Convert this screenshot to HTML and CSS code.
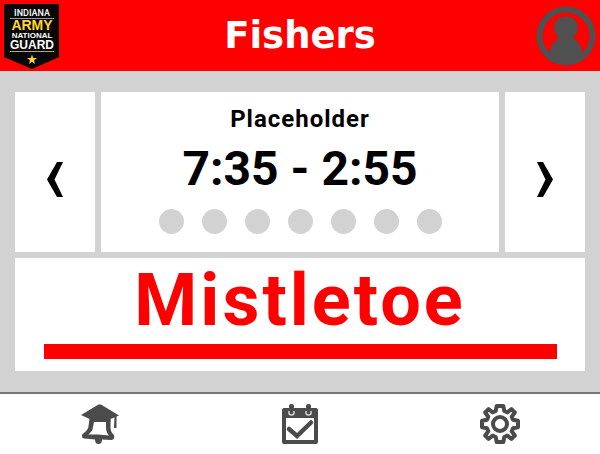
FILE: index.html
```html
<!DOCTYPE html>
<html lang="en">
<head>
<meta charset="utf-8">
<meta name="viewport" content="width=device-width, initial-scale=1">
<title>Fishers</title>
<link rel="stylesheet" href="styles.css">
</head>
<body>
<header class="topbar">
  <a class="badge" href="#" aria-label="Indiana Army National Guard">
    <svg width="56" height="65" viewBox="0 0 56 65">
      <path d="M2 0H54Q55 0 55 2V53L28 65L0 53V2Q0 0 2 0Z" fill="#080808"/>
      <g text-anchor="middle" fill="#fff" class="badge-text">
        <text x="28" y="12" font-size="9" class="light">INDIANA</text>
        <text x="28" y="26" font-size="14" fill="#ffd530">ARMY</text>
        <text x="28" y="34" font-size="8">NATIONAL</text>
        <text x="28" y="45" font-size="12">GUARD</text>
      </g>
      <path d="M6 14.500H50" stroke="#9a9a9a"/>
      <path d="M6 47.500H50" stroke="#b9a65a"/>
      <path d="M28 50.500L29.200 54H33L30 56.200L31.100 60L28 57.700L24.900 60L26 56.200L23 54H26.800Z" fill="#ffd530"/>
    </svg>
  </a>
  <h1 class="title">Fishers</h1>
  <button class="profile" type="button" aria-label="Profile">
    <svg width="60" height="60" viewBox="0 0 60 60">
      <circle cx="30" cy="30" r="26.500" fill="none" stroke="#505050" stroke-width="6"/>
      <path d="M13 47C15 39 19 34 23 31.500C20 29 18 26 18 22C18 15 23 10.500 30 10.500S42 15 42 22C42 26 40 29 37 31.500C41 34 45 39 47 47Q40 57 30 57T13 47Z" fill="#505050"/>
    </svg>
  </button>
</header>

<main class="content">
  <button class="card arrow" type="button" aria-label="Previous">
    <svg width="16" height="35" viewBox="0 0 16 35"><path d="M10 0H16L7.500 17.500L16 35H10L0 17.500Z"/></svg>
  </button>
  <section class="card schedule">
    <h2 class="period">Placeholder</h2>
    <p class="time">7:35 - 2:55</p>
    <div class="dots">
      <span class="dot"></span><span class="dot"></span><span class="dot"></span><span class="dot"></span><span class="dot"></span><span class="dot"></span><span class="dot"></span>
    </div>
  </section>
  <button class="card arrow" type="button" aria-label="Next">
    <svg width="16" height="35" viewBox="0 0 16 35"><path d="M6 0H0L8.500 17.500L0 35H6L16 17.500Z"/></svg>
  </button>
  <section class="card event">
    <p class="event-name">Mistletoe</p>
    <div class="event-bar"></div>
  </section>
</main>

<nav class="tabs">
  <a class="tab" href="#" aria-label="Bell schedule">
    <svg width="40" height="40" viewBox="0 0 40 40">
      <path d="M9.500 15L8.500 22C8 27 4 28 2 31Q1.500 34 4 34.500L15 35.500Q15 40 18.500 40T22 35.500L32 36Q35 35 34 31C31 28 30.500 26 30.500 22V15ZM14 18H26V23C26 27 27 29 29 31.500L18 30.500L8.500 30.500C11 28 12.500 27 13 23Z" fill="#4b4b4b" fill-rule="evenodd"/>
      <path d="M1 11L18.500 0.500L21 0.500L39 11.500L30.500 15V18Q20 13.500 10 18L9.500 15Z" fill="#4b4b4b"/>
      <path d="M20 9L35.500 12" fill="none" stroke="#4b4b4b"/>
      <path d="M34.500 12H36.500V24H34Z" fill="#4b4b4b"/>
    </svg>
  </a>
  <a class="tab" href="#" aria-label="Calendar">
    <svg width="40" height="40" viewBox="0 0 40 40">
      <path d="M4 4H36Q38 4 38 6V38Q38 40 36 40H4Q2 40 2 38V6Q2 4 4 4ZM6 14V36H34V14Z" fill="#4b4b4b" fill-rule="evenodd"/>
      <rect x="9" y="0" width="5" height="10" rx="2" fill="#4b4b4b"/>
      <rect x="26" y="0" width="5" height="10" rx="2" fill="#4b4b4b"/>
      <path d="M9 7V9Q9 11 11.500 11T14 9V7M26 7V9Q26 11 28.500 11T31 9V7" fill="none" stroke="#d6d6d6" stroke-width="1.500"/>
      <path d="M9 25L17 32L31 18.500" fill="none" stroke="#4b4b4b" stroke-width="4.500" stroke-linecap="round"/>
    </svg>
  </a>
  <a class="tab" href="#" aria-label="Settings">
    <svg width="40" height="40" viewBox="0 0 40 40">
      <path d="M16.700 2H23.300L24.300 7L27.300 8.300L31.500 5.200L34.800 8.500L31.700 12.700L33 15.700L38 16.700V23.300L33 24.300L31.700 27.300L34.800 31.500L31.500 34.800L27.300 31.700L24.300 33L23.300 38H16.700L15.700 33L12.700 31.700L8.500 34.800L5.200 31.500L8.300 27.300L7 24.300L2 23.300V16.700L7 15.700L8.300 12.700L5.200 8.500L8.500 5.200L12.700 8.300L15.700 7Z" fill="none" stroke="#4b4b4b" stroke-width="4" stroke-linejoin="round"/>
      <circle cx="20" cy="20" r="7" fill="none" stroke="#4b4b4b" stroke-width="4"/>
    </svg>
  </a>
</nav>
</body>
</html>
```
FILE: styles.css
```css
* {
  box-sizing: border-box;
}

body {
  margin: 0;
  min-height: 100vh;
  display: flex;
  flex-direction: column;
  background: #d2d2d2;
  color: #000;
  font-family: Roboto, "Liberation Sans", sans-serif;
}

h1, h2, p {
  margin: 0;
}

button {
  border: 0;
  padding: 0;
  background: none;
  color: inherit;
  cursor: pointer;
}

svg {
  display: block;
}

.topbar {
  display: grid;
  grid-template-columns: 60px 1fr 60px;
  align-items: center;
  padding: 0 4px;
  background: #f00;
}

.badge {
  padding-top: 2px;
}

.badge-text {
  font-family: "Liberation Sans", sans-serif;
  font-weight: 700;
}

.light {
  font-family: Roboto, sans-serif;
  font-weight: 500;
}

.title {
  color: #fff;
  font: 700 37px/71px "DejaVu Sans", sans-serif;
  text-align: center;
}

.content {
  flex: 1;
  display: grid;
  grid-template-columns: 80px 1fr 80px;
  grid-template-rows: 160px auto;
  align-content: start;
  gap: 6px;
  padding: 21px 15px;
}

.card {
  background: #fff;
}

.arrow {
  display: flex;
  align-items: center;
  justify-content: center;
  padding-top: 14px;
}

.schedule {
  display: flex;
  flex-direction: column;
  align-items: center;
  padding-top: 11px;
}

.period {
  font-size: 24px;
  font-weight: 700;
  line-height: 32px;
  letter-spacing: 1px;
}

.time {
  font-size: 48px;
  font-weight: 700;
  line-height: 68px;
}

.dots {
  display: flex;
  gap: 18px;
  margin-top: 6px;
}

.dot {
  width: 25px;
  height: 25px;
  border-radius: 50%;
  background: #d2d2d2;
}

.event {
  grid-column: 1 / -1;
  padding-bottom: 12px;
  text-align: center;
}

.event-name {
  color: #f00;
  font-size: 72px;
  font-weight: 700;
  line-height: 86px;
  letter-spacing: 3px;
}

.event-bar {
  width: 90%;
  height: 15px;
  margin: 0 auto;
  background: #f00;
}

.tabs {
  display: grid;
  grid-template-columns: repeat(3, 1fr);
  height: 62px;
  border-top: 2px solid #777;
  background: #fff;
}

.tab {
  display: flex;
  align-items: center;
  justify-content: center;
}
```
